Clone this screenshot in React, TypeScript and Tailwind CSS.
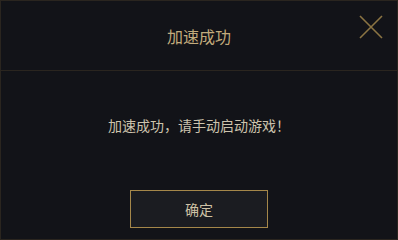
import React from 'react'

// ── Accelerate success dialog ───────────────────────────────────────

function CloseIcon() {
  return (
    <svg width="24" height="24" viewBox="0 0 24 24" fill="none">
      <path d="M1 1 L23 23 M23 1 L1 23" stroke="#8b7443" strokeWidth="1.6" />
    </svg>
  )
}

export default function App() {
  return (
    <div
      className="w-[398px] h-[240px] bg-[#121318] border border-[#2a251f] flex flex-col"
      style={{ fontFamily: '"Noto Sans CJK SC", "Noto Sans", sans-serif' }}
    >
      <div className="relative h-[70px] border-b border-[#2a251f] flex items-center justify-center">
        <span className="text-[16px] text-[#c2ab7c] leading-none">加速成功</span>
        <button className="absolute left-[358px] top-[14px]">
          <CloseIcon />
        </button>
      </div>

      <div className="flex-1 flex flex-col items-center">
        <p className="mt-[47px] text-[14px] leading-none text-[#cdc3ad]">加速成功，请手动启动游戏！</p>
        <button className="mt-[58px] w-[138px] h-[38px] bg-[#1b1c21] border border-[#a5874a] text-[14px] text-[#cfc2a6]">
          确定
        </button>
      </div>
    </div>
  )
}
